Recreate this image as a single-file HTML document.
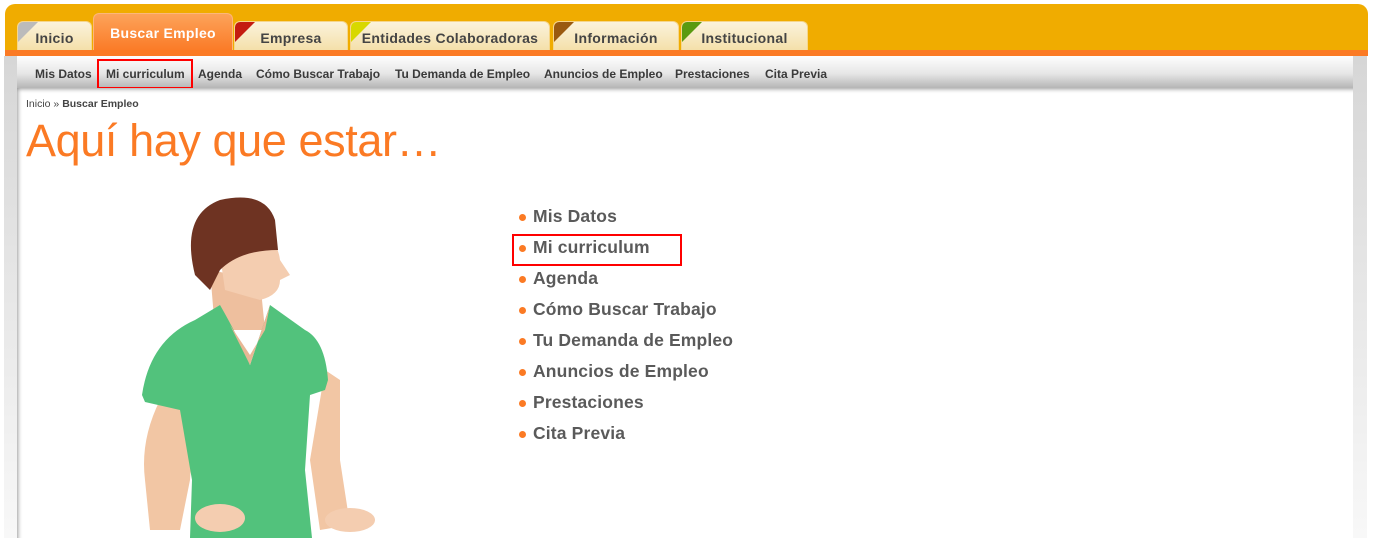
<!DOCTYPE html>
<html><head><meta charset="utf-8"><style>
*{margin:0;padding:0;box-sizing:border-box}
body{width:1379px;height:538px;background:#fff;font-family:"Liberation Sans",Arial,sans-serif;position:relative;overflow:hidden}
.hdr{position:absolute;left:5px;top:4px;width:1363px;height:48px;background:#f0ac00;border-radius:10px 10px 0 0}
.stripe{position:absolute;left:5px;top:50px;width:1363px;height:6px;background:#fb7a24}
.side{position:absolute;top:56px;width:13px;height:482px;background:linear-gradient(#d6d6d6,#f8f8f8)}
.tab{position:absolute;top:21px;height:30px;background:linear-gradient(#fbf3dc,#f4dfa8);border:1px solid #f6d68a;border-bottom:none;border-radius:6px 6px 0 0;font-weight:bold;font-size:14px;color:#444;text-align:center;line-height:32px;overflow:hidden;letter-spacing:.3px}
.tab i{position:absolute;left:0;top:0;width:0;height:0;border-top:20px solid;border-right:20px solid transparent}
.tab.act{top:13px;height:38px;background:linear-gradient(#fca35a,#fb7a26);border-color:#fcb77a;color:#fff;line-height:38px}
.sub{position:absolute;left:17px;top:56px;width:1336px;height:32px;background:linear-gradient(#fefefe,#e6e6e6 55%,#b5b5b5)}
.sub span{position:absolute;top:11px;font-size:12px;font-weight:bold;color:#3a3a3a}
.content{position:absolute;left:17px;top:88px;width:1336px;height:450px;background:#fff;box-shadow:inset 3px 3px 4px -2px #999}
.bc{position:absolute;left:26px;top:98px;font-size:10.5px;color:#444}
h1{position:absolute;left:26px;top:115px;font-weight:normal;font-size:45px;color:#fb7a24;letter-spacing:-.4px}
.li{position:absolute;left:533px;font-size:17.5px;font-weight:bold;color:#5a5a5a;letter-spacing:.15px}
.li:before{content:"";position:absolute;left:-14px;top:8px;width:7px;height:7px;border-radius:50%;background:#fb7a24}
.box{position:absolute;border:2px solid #f00}
</style></head><body>
<div class="hdr"></div>
<div class="tab" style="left:17px;width:75px">Inicio<i style="border-top-color:#bbb"></i></div>
<div class="tab act" style="left:93px;width:140px">Buscar Empleo</div>
<div class="tab" style="left:234px;width:114px">Empresa<i style="border-top-color:#c41b10"></i></div>
<div class="tab" style="left:350px;width:200px">Entidades Colaboradoras<i style="border-top-color:#d8d800"></i></div>
<div class="tab" style="left:553px;width:126px">Información<i style="border-top-color:#9a5a10"></i></div>
<div class="tab" style="left:681px;width:127px">Institucional<i style="border-top-color:#5a9a10"></i></div>
<div class="stripe"></div>
<div class="side" style="left:4px"></div>
<div class="side" style="left:1353px;width:14px"></div>
<div class="sub">
<span style="left:18px">Mis Datos</span><span style="left:89px">Mi curriculum</span><span style="left:181px">Agenda</span><span style="left:239px">Cómo Buscar Trabajo</span><span style="left:378px">Tu Demanda de Empleo</span><span style="left:527px">Anuncios de Empleo</span><span style="left:658px">Prestaciones</span><span style="left:748px">Cita Previa</span>
</div>
<div class="box" style="left:97px;top:59px;width:96px;height:30px"></div>
<div class="content"></div>
<div class="bc">Inicio » <b>Buscar Empleo</b></div>
<h1>Aquí hay que estar…</h1>
<svg style="position:absolute;left:100px;top:180px" width="340" height="358" viewBox="0 0 340 358">
<path d="M60 220 Q40 260 45 300 L50 350 L80 350 L90 300 L95 230Z" fill="#f2c6a4"/>
<path d="M225 190 L240 200 L240 280 L250 345 L220 350 L210 280Z" fill="#f2c6a4"/>
<path d="M110 90 L160 100 L165 150 L115 150Z" fill="#eebf9e"/>
<path d="M115 40 Q175 40 180 80 L190 95 L180 100 Q180 115 160 120 L125 110Z" fill="#f4cdb0"/>
<path d="M95 95 Q80 35 120 20 Q165 10 175 40 L178 70 Q140 70 120 90 L110 110Z" fill="#6e3322"/>
<path d="M42 215 Q50 160 95 140 L120 125 Q140 160 150 185 Q160 155 170 125 L205 150 Q225 160 228 200 L225 210 L210 215 L205 290 L212 358 L90 358 L92 300 L80 230 L45 222Z" fill="#52c27c"/>
<path d="M120 125 L150 185 L170 125 L165 150 L150 175 L130 145Z" fill="#e9b795"/>
<ellipse cx="120" cy="338" rx="25" ry="14" fill="#f4cdb0"/>
<ellipse cx="250" cy="340" rx="25" ry="12" fill="#f4cdb0"/>
</svg>
<div class="li" style="top:206px">Mis Datos</div>
<div class="li" style="top:237px">Mi curriculum</div>
<div class="li" style="top:268px">Agenda</div>
<div class="li" style="top:299px">Cómo Buscar Trabajo</div>
<div class="li" style="top:330px">Tu Demanda de Empleo</div>
<div class="li" style="top:361px">Anuncios de Empleo</div>
<div class="li" style="top:392px">Prestaciones</div>
<div class="li" style="top:423px">Cita Previa</div>
<div class="box" style="left:512px;top:234px;width:170px;height:32px"></div>
</body></html>
